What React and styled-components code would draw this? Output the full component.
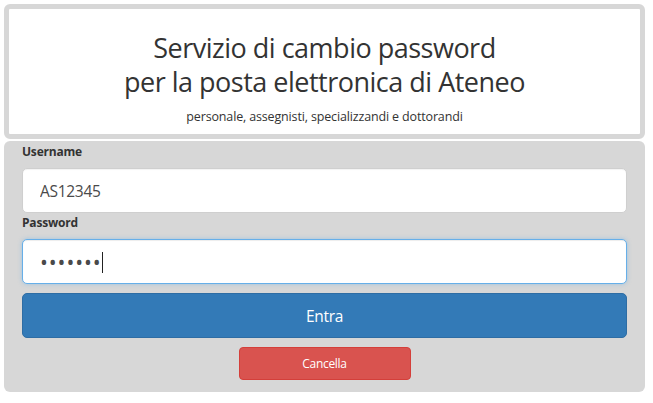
import React from "react";
import styled, { createGlobalStyle } from "styled-components";

const Global = createGlobalStyle`
  html, body { margin: 0; padding: 0; background: #fff; }
  body { font-family: "Open Sans", "Noto Sans", sans-serif; color: #333; }
  * { box-sizing: border-box; }
`;

const Page = styled.div`
  width: 641px;
  margin: 4px 0 0 4px;
  display: flex;
  flex-direction: column;
  gap: 2px;
`;

const Header = styled.header`
  border: 5px solid #d7d7d7;
  border-radius: 6px;
  background: #fff;
  height: 135px;
  padding-top: 22px;
  text-align: center;
`;

const Title = styled.h1`
  margin: 0;
  font-size: 27px;
  font-weight: 400;
  line-height: 34px;
  letter-spacing: -0.5px;
  color: #333;
`;

const Subtitle = styled.p`
  margin: 10px 0 0;
  font-size: 12.5px;
  line-height: 16px;
  letter-spacing: -0.15px;
  color: #333;
`;

const Panel = styled.form`
  background: #d7d7d7;
  border-radius: 6px;
  padding: 1px 18px 12px;
  display: flex;
  flex-direction: column;
`;

const Label = styled.label`
  font-size: 12px;
  font-weight: 700;
  line-height: 20px;
  margin-bottom: 6px;
  letter-spacing: -0.2px;
  color: #333;
`;

const Input = styled.input`
  height: 45px;
  width: 100%;
  border: 1px solid ${(p) => (p.$focus ? "#66afe9" : "#cfcfcf")};
  border-radius: 5px;
  background: #fff;
  padding: 0 17px;
  font-family: "Open Sans", "Noto Sans", sans-serif;
  font-size: ${(p) => (p.type === "password" ? "21px" : "15.5px")};
  letter-spacing: ${(p) => (p.type === "password" ? "0.9px" : "-0.3px")};
  color: #4a4a4a;
  outline: none;
  box-shadow: ${(p) =>
    p.$focus
      ? "inset 0 1px 1px rgba(0,0,0,.075), 0 0 4px rgba(102,175,233,.5)"
      : "inset 0 1px 1px rgba(0,0,0,.05)"};
  caret-color: transparent;
`;

const Caret = styled.span`
  position: absolute;
  left: 80px;
  top: 13px;
  width: 1px;
  height: 21px;
  background: #222;
  pointer-events: none;
`;

const Button = styled.button`
  display: block;
  border-radius: ${(p) => (p.$small ? "4px" : "5px")};
  border: 1px solid ${(p) => (p.$danger ? "#d43f3a" : "#2e6da4")};
  background: ${(p) => (p.$danger ? "#d9534f" : "#337ab7")};
  color: #fff;
  font-family: "Open Sans", "Noto Sans", sans-serif;
  font-size: ${(p) => (p.$small ? "12px" : "15.5px")};
  letter-spacing: -0.3px;
  height: ${(p) => (p.$small ? "33px" : "45px")};
  width: ${(p) => (p.$small ? "172px" : "100%")};
  align-self: center;
  margin-top: 9px;
  cursor: pointer;
`;

const PasswordWrap = styled.div`
  position: relative;
  display: flex;
  flex-direction: column;
`;

export default function App() {
  return (
    <>
      <Global />
      <Page>
        <Header>
          <Title>
            Servizio di cambio password
            <br />
            per la posta elettronica di Ateneo
          </Title>
          <Subtitle>personale, assegnisti, specializzandi e dottorandi</Subtitle>
        </Header>
        <Panel onSubmit={(e) => e.preventDefault()}>
          <Label htmlFor="user">Username</Label>
          <Input id="user" type="text" defaultValue="AS12345" />
          <Label htmlFor="pwd">Password</Label>
          <PasswordWrap>
            <Input id="pwd" type="password" defaultValue="1234567" $focus />
            <Caret />
          </PasswordWrap>
          <Button type="submit">Entra</Button>
          <Button type="reset" $danger $small>
            Cancella
          </Button>
        </Panel>
      </Page>
    </>
  );
}
